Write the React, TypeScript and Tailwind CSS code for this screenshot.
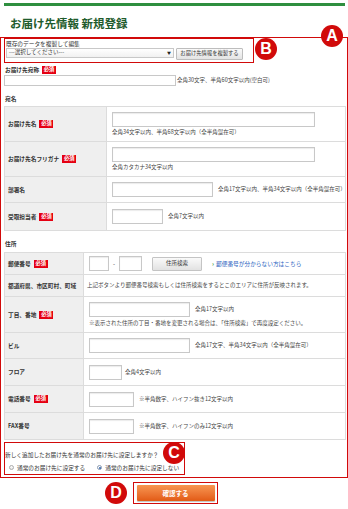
import React from 'react';

const font = { fontFamily: '"Noto Sans CJK JP", "Noto Sans", sans-serif' };

function Badge() {
  return (
    <span className="ml-[3px] inline-flex h-[8px] w-[14px] items-center justify-center bg-[#e50012] text-[5.3px] font-bold leading-none text-white">
      必須
    </span>
  );
}

function Input({ w }: { w: string }) {
  return <div className={`${w} h-[15px] border border-[#c8c8c8] bg-white shadow-[inset_0_1px_1px_rgba(0,0,0,0.08)]`} />;
}

function Hint({ children, className = '' }: { children: React.ReactNode; className?: string }) {
  return <span className={`text-[5.5px] leading-[7px] text-[#444] whitespace-nowrap ${className}`}>{children}</span>;
}

function Row({
  label,
  req,
  h,
  labelW,
  children,
  last,
}: {
  label: string;
  req?: boolean;
  h: string;
  labelW: string;
  children: React.ReactNode;
  last?: boolean;
}) {
  return (
    <div className={`flex ${h} ${last ? '' : 'border-b border-[#dcdcdc]'}`}>
      <div className={`${labelW} flex shrink-0 items-center border-r border-[#dcdcdc] bg-[#efefef] pl-[3px]`}>
        <span className="text-[5.7px] font-bold leading-none text-[#333] whitespace-nowrap">{label}</span>
        {req && <Badge />}
      </div>
      <div className="flex flex-1 flex-col justify-center pl-[5px]">{children}</div>
    </div>
  );
}

function Circle({ letter, className }: { letter: string; className: string }) {
  return (
    <div
      className={`absolute flex h-[22px] w-[22px] items-center justify-center rounded-full bg-[#d10a0a] text-[16px] font-bold leading-none text-white ${className}`}
      style={{ fontFamily: '"Liberation Sans", Arial, sans-serif' }}
    >
      {letter}
    </div>
  );
}

export default function App() {
  return (
    <div className="relative h-[509px] w-[348px] overflow-hidden bg-white text-[#333]" style={font}>
      <div className="ml-[4px] mt-[3px] h-[3px] w-[341px] bg-[#2f8f3f]" />
      <h1 className="mt-[10px] pl-[10px] text-[11.5px] font-bold leading-[14px] text-[#1f5c2d]">お届け先情報 新規登録</h1>

      <div className="mt-[7px] w-[348px] border border-[#d10a0a] pb-[2px]">
        <div className="ml-[3px] h-[25px] w-[250px] border border-[#d10a0a] pl-[1px] pt-[1px]">
          <div className="text-[5.7px] leading-[7px] text-[#333]">既存のデータを複製して編集</div>
          <div className="mt-[1px] flex items-start gap-[2px]">
            <div className="flex h-[10px] w-[168px] items-center justify-between border border-[#c8c8c8] bg-gradient-to-b from-white to-[#f1f1f1] px-[2px]">
              <span className="text-[5.5px] leading-none text-[#333]">---選択してください---</span>
              <span className="text-[4px] leading-none text-[#222]">▼</span>
            </div>
            <div className="flex h-[12px] w-[67px] items-center justify-center rounded-[1px] border border-[#bdbdbd] bg-gradient-to-b from-[#fafafa] to-[#e4e4e4] text-[5.3px] leading-none text-[#333]">
              お届け先情報を複製する
            </div>
          </div>
        </div>

        <div className="mt-[3px] flex h-[8px] items-center pl-[4px]">
          <span className="text-[5.7px] font-bold leading-none">お届け先宛称</span>
          <Badge />
        </div>
        <div className="mt-[1px] flex items-center gap-[1px] pl-[3px]">
          <div className="h-[11px] w-[172px] border border-[#c8c8c8] bg-white" />
          <Hint>全角30文字、半角60文字以内(空白可)</Hint>
        </div>

        <div className="mt-[9px] pl-[4px] text-[5.7px] font-bold leading-[7px]">宛名</div>

        <div className="ml-[3px] mt-[4px] w-[342px] border border-[#dcdcdc]">
          <Row label="お届け先名" req h="h-[35px]" labelW="w-[102px]">
            <Input w="w-[203px]" />
            <Hint className="mt-[2px]">全角34文字以内、半角68文字以内（全半角混在可）</Hint>
          </Row>
          <Row label="お届け先名フリガナ" req h="h-[35px]" labelW="w-[102px]">
            <Input w="w-[203px]" />
            <Hint className="mt-[2px]">全角カタカナ34文字以内</Hint>
          </Row>
          <Row label="部署名" h="h-[26px]" labelW="w-[102px]">
            <div className="flex items-center gap-[5px]">
              <Input w="w-[101px]" />
              <Hint>全角17文字以内、半角34文字以内（全半角混在可）</Hint>
            </div>
          </Row>
          <Row label="受取担当者" req h="h-[27px]" labelW="w-[102px]" last>
            <div className="flex items-center gap-[5px]">
              <Input w="w-[51px]" />
              <Hint>全角7文字以内</Hint>
            </div>
          </Row>
        </div>

        <div className="mt-[9px] pl-[4px] text-[5.7px] font-bold leading-[7px]">住所</div>

        <div className="ml-[3px] mt-[5px] w-[342px] border border-[#dcdcdc]">
          <Row label="郵便番号" req h="h-[22px]" labelW="w-[79px]">
            <div className="flex items-center">
              <Input w="w-[20px]" />
              <span className="mx-[4px] text-[6px] leading-none">-</span>
              <Input w="w-[23px]" />
              <div className="ml-[10px] flex h-[14px] w-[50px] items-center justify-center rounded-[1px] border border-[#c4c4c4] bg-gradient-to-b from-[#fafafa] to-[#e2e2e2] text-[5.5px] leading-none">
                住所検索
              </div>
              <span className="ml-[10px] text-[6px] font-bold leading-none text-[#3a9a3a]">›</span>
              <span className="ml-[2px] text-[5.7px] leading-none text-[#2a62c0] whitespace-nowrap">郵便番号が分からない方はこちら</span>
            </div>
          </Row>
          <Row label="都道府県、市区町村、町域" h="h-[22px]" labelW="w-[79px]">
            <Hint className="-ml-[2px]">上記ボタンより郵便番号検索もしくは住所検索をするとこのエリアに住所が反映されます。</Hint>
          </Row>
          <Row label="丁目、番地" req h="h-[36px]" labelW="w-[79px]">
            <div className="flex items-center gap-[5px]">
              <Input w="w-[101px]" />
              <Hint>全角17文字以内</Hint>
            </div>
            <Hint className="mt-[3px]">※表示された住所の丁目・番地を変更される場合は、「住所検索」で再度設定ください。</Hint>
          </Row>
          <Row label="ビル" h="h-[26px]" labelW="w-[79px]">
            <div className="flex items-center gap-[5px]">
              <Input w="w-[101px]" />
              <Hint>全角17文字、半角34文字以内（全半角混在可）</Hint>
            </div>
          </Row>
          <Row label="フロア" h="h-[27px]" labelW="w-[79px]">
            <div className="flex items-center gap-[3px]">
              <Input w="w-[33px]" />
              <Hint>全角4文字以内</Hint>
            </div>
          </Row>
          <Row label="電話番号" req h="h-[27px]" labelW="w-[79px]">
            <div className="flex items-center gap-[5px]">
              <Input w="w-[45px]" />
              <Hint>※半角数字、ハイフン抜き12文字以内</Hint>
            </div>
          </Row>
          <Row label="FAX番号" h="h-[26px]" labelW="w-[79px]" last>
            <div className="flex items-center gap-[5px]">
              <Input w="w-[45px]" />
              <Hint>※半角数字、ハイフンのみ12文字以内</Hint>
            </div>
          </Row>
        </div>

        <div className="ml-[3px] mt-[2px] h-[33px] w-[181px] border border-[#d10a0a] pt-[8px]">
          <div className="text-[5.7px] leading-[7px] text-[#333]">新しく追加したお届け先を通常のお届け先に設定しますか？</div>
          <div className="mt-[7px] flex items-center pl-[4px]">
            <span className="h-[5px] w-[5px] rounded-full border border-[#aaa] bg-gradient-to-b from-white to-[#e6e6e6]" />
            <span className="ml-[3px] text-[5.7px] leading-none">通常のお届け先に設定する</span>
            <span className="ml-[12px] flex h-[5px] w-[5px] items-center justify-center rounded-full border border-[#8a9ab0] bg-white">
              <span className="h-[2.5px] w-[2.5px] rounded-full bg-[#2b5fa8]" />
            </span>
            <span className="ml-[3px] text-[5.7px] leading-none">通常のお届け先に設定しない</span>
          </div>
        </div>
      </div>

      <div className="ml-[133px] mt-[4px] flex h-[22px] w-[85px] items-center justify-center border border-[#d10a0a]">
        <div className="flex h-[16px] w-[78px] items-center justify-center rounded-[1px] bg-gradient-to-b from-[#f79650] to-[#e25a12] text-[6.5px] font-bold leading-none text-white shadow-[0_1px_1px_rgba(0,0,0,0.25)]">
          確認する
        </div>
      </div>

      <Circle letter="A" className="left-[321px] top-[25px]" />
      <Circle letter="B" className="left-[255px] top-[38px]" />
      <Circle letter="C" className="left-[163px] top-[442px]" />
      <Circle letter="D" className="left-[105px] top-[482px]" />
    </div>
  );
}
